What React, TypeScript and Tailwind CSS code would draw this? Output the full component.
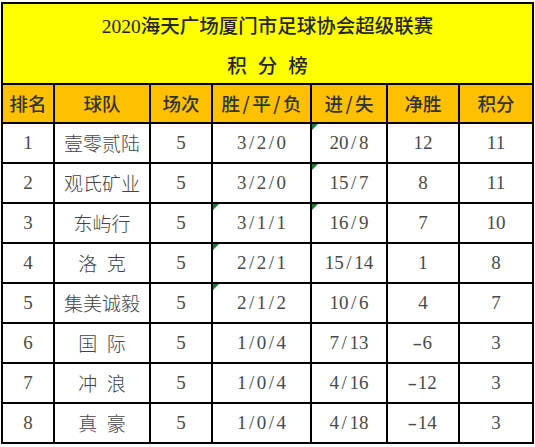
const rows = [
  { rank: "1", team: "壹零贰陆", games: "5", wdl: "3/2/0", gf: "20/8", net: "12", pts: "11", flagWdl: false, flagGf: true },
  { rank: "2", team: "观氏矿业", games: "5", wdl: "3/2/0", gf: "15/7", net: "8", pts: "11", flagWdl: false, flagGf: true },
  { rank: "3", team: "东屿行", games: "5", wdl: "3/1/1", gf: "16/9", net: "7", pts: "10", flagWdl: true, flagGf: true },
  { rank: "4", team: "洛\u2002克", games: "5", wdl: "2/2/1", gf: "15/14", net: "1", pts: "8", flagWdl: true, flagGf: false },
  { rank: "5", team: "集美诚毅", games: "5", wdl: "2/1/2", gf: "10/6", net: "4", pts: "7", flagWdl: true, flagGf: false },
  { rank: "6", team: "国\u2002际", games: "5", wdl: "1/0/4", gf: "7/13", net: "-6", pts: "3", flagWdl: false, flagGf: false },
  { rank: "7", team: "冲\u2002浪", games: "5", wdl: "1/0/4", gf: "4/16", net: "-12", pts: "3", flagWdl: false, flagGf: false },
  { rank: "8", team: "真\u2002豪", games: "5", wdl: "1/0/4", gf: "4/18", net: "-14", pts: "3", flagWdl: false, flagGf: false },
];

const headers = ["排名", "球队", "场次", "胜/平/负", "进/失", "净胜", "积分"];

const cjk = "font-['Noto_Sans_CJK_SC',sans-serif]";
const num = "font-['Liberation_Serif','Noto_Sans_CJK_SC',serif]";

// SimSun-style wide slashes
const Slashed = ({ text }: { text: string }) => {
  const parts = text.split("/");
  return (
    <span>
      {parts.map((p, i) => (
        <span key={i}>
          {i > 0 && <span className="mx-[2.5px]">/</span>}
          {p}
        </span>
      ))}
    </span>
  );
};

const Signed = ({ text }: { text: string }) =>
  text.startsWith("-") ? (
    <span>
      <span className="inline-block scale-x-150 mr-[2px]">-</span>
      {text.slice(1)}
    </span>
  ) : (
    <span>{text}</span>
  );

const Flag = () => (
  <span className="absolute left-0 top-0 w-0 h-0 border-t-[6px] border-t-[#237a36] border-r-[6px] border-r-transparent" />
);

const Cell = ({ children, flag, className = "" }: { children: React.ReactNode; flag?: boolean; className?: string }) => (
  <div className={`relative bg-white flex items-center justify-center text-[19px] text-[#4a4a4a] ${className}`}>
    {flag && <Flag />}
    {children}
  </div>
);

export default function App() {
  return (
    <div className="w-[535px] h-[447px] bg-white overflow-hidden">
      <div className="ml-[1px] mt-[2px] w-[533px] grid grid-cols-[50px_94px_60px_97px_74px_70px_72px] grid-rows-[79px_37px_repeat(8,38px)] gap-[2px] p-[2px] bg-black">
        <div className={`col-span-7 bg-[#ffff00] flex flex-col items-center pt-[11px] gap-[18px] text-[19.5px] leading-5 font-medium text-[#262626] ${cjk}`}>
          <div>
            <span className={num}>2020</span>海天广场厦门市足球协会超级联赛
          </div>
          <div className="flex gap-[11px]">
            <span>积</span>
            <span>分</span>
            <span>榜</span>
          </div>
        </div>

        {headers.map((h) => (
          <div key={h} className={`bg-[#ffc000] flex items-center justify-center text-[18.5px] font-medium text-[#333333] ${cjk}`}>
            {h.includes("/") ? <Slashed text={h} /> : h}
          </div>
        ))}

        {rows.map((r) => (
          <>
            <Cell key={r.rank + "a"} className={num}>{r.rank}</Cell>
            <Cell key={r.rank + "b"} className={`${cjk} text-[18.5px] font-light text-[#444444]`}>{r.team}</Cell>
            <Cell key={r.rank + "c"} className={num}>{r.games}</Cell>
            <Cell key={r.rank + "d"} className={num} flag={r.flagWdl}><Slashed text={r.wdl} /></Cell>
            <Cell key={r.rank + "e"} className={num} flag={r.flagGf}><Slashed text={r.gf} /></Cell>
            <Cell key={r.rank + "f"} className={num}><Signed text={r.net} /></Cell>
            <Cell key={r.rank + "g"} className={num}>{r.pts}</Cell>
          </>
        ))}
      </div>
    </div>
  );
}
